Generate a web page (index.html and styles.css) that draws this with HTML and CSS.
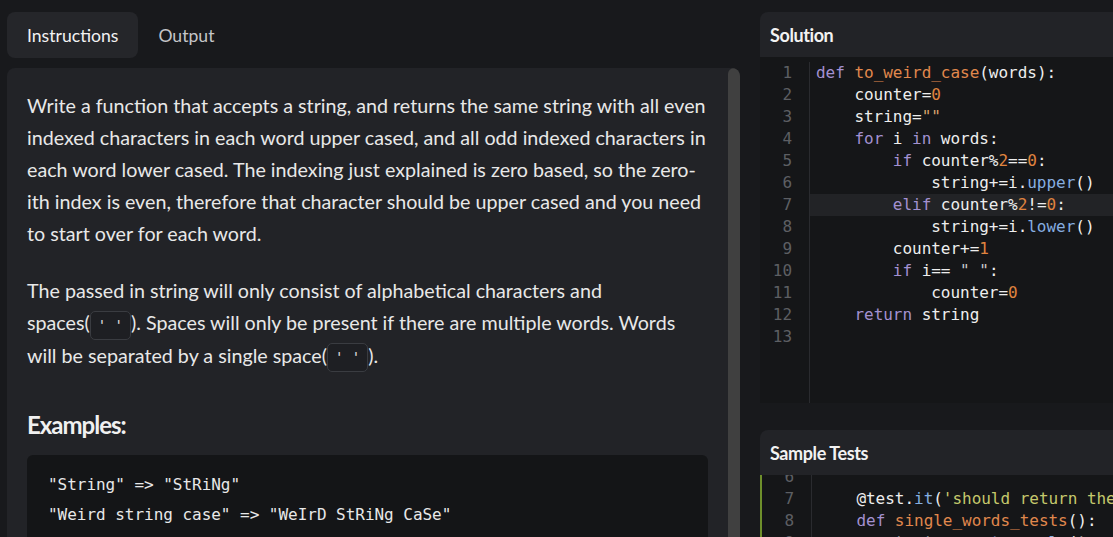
FILE: index.html
```html
<!DOCTYPE html>
<html>
<head>
<meta charset="utf-8">
<link rel="stylesheet" href="styles.css">
</head>
<body>
<div class="app">
  <div class="left">
    <nav class="tabs">
      <div class="tab active">Instructions</div>
      <div class="tab">Output</div>
    </nav>
    <div class="panel">
      <div class="content">
        <p>Write a function that accepts a string, and returns the same string with all even indexed characters in each word upper cased, and all odd indexed characters in each word lower cased. The indexing just explained is zero based, so the zero-ith index is even, therefore that character should be upper cased and you need to start over for each word.</p>
        <p>The passed in string will only consist of alphabetical characters and <span class="nw">spaces(<code class="ic">' '</code>).</span> Spaces will only be present if there are multiple words. Words will be separated by a single <span class="nw">space(<code class="ic">' '</code>).</span></p>
        <h2>Examples:</h2>
        <pre class="example">"String" =&gt; "StRiNg"
"Weird string case" =&gt; "WeIrD StRiNg CaSe"</pre>
      </div>
      <div class="scrollbar"></div>
    </div>
  </div>
  <div class="right">
    <section class="editor solution">
      <header class="ed-head">Solution</header>
      <div class="ed-body">
        <div class="gutter">
          <div>1</div><div>2</div><div>3</div><div>4</div><div>5</div><div>6</div><div>7</div><div>8</div><div>9</div><div>10</div><div>11</div><div>12</div><div>13</div>
        </div>
        <div class="lines">
          <div class="ln"><span class="k">def</span> <span class="f">to_weird_case</span>(words):</div>
          <div class="ln">    counter=<span class="n">0</span></div>
          <div class="ln">    string=<span class="s">""</span></div>
          <div class="ln">    <span class="k">for</span> i <span class="k">in</span> words:</div>
          <div class="ln">        <span class="k">if</span> counter%<span class="n">2</span>==<span class="n">0</span>:</div>
          <div class="ln">            string+=i.<span class="m">upper</span>()</div>
          <div class="ln active">        <span class="k">elif</span> counter%<span class="n">2</span>!=<span class="n">0</span>:</div>
          <div class="ln">            string+=i.<span class="m">lower</span>()</div>
          <div class="ln">        counter+=<span class="n">1</span></div>
          <div class="ln">        <span class="k">if</span> i== <span class="s2">" "</span>:</div>
          <div class="ln">            counter=<span class="n">0</span></div>
          <div class="ln">    <span class="k">return</span> string</div>
          <div class="ln"> </div>
        </div>
      </div>
    </section>
    <section class="editor tests">
      <header class="ed-head">Sample Tests</header>
      <div class="ed-body scrolled">
        <div class="gutter shift">
          <div>6</div><div>7</div><div>8</div><div>9</div>
        </div>
        <div class="lines shift">
          <div class="ln"> </div>
          <div class="ln">    @test.<span class="m">it</span>(<span class="t">'should return the correct value for a single word'</span>)</div>
          <div class="ln">    <span class="k">def</span> <span class="f">single_words_tests</span>():</div>
          <div class="ln">        test.<span class="m">assert_equals</span>(to_weird_case(<span class="t">'This'</span>), <span class="t">'ThIs'</span>)</div>
        </div>
      </div>
    </section>
  </div>
</div>
</body>
</html>
```

FILE: styles.css
```css
* { box-sizing: border-box; }
html, body {
  margin: 0;
  padding: 0;
  height: 100%;
  overflow: hidden;
}
body {
  background: #18191c;
  color: #e6e6e6;
  font-family: Lato, "Noto Sans", sans-serif;
}
.app {
  display: flex;
  gap: 20px;
  padding: 12px 0 0 7px;
  height: 100%;
  width: 1200px;
}
.left {
  width: 733px;
  flex: none;
  display: flex;
  flex-direction: column;
  gap: 10px;
}
.tabs {
  display: flex;
  height: 46px;
}
.tab {
  display: flex;
  align-items: center;
  padding: 0 20px;
  font-size: 17.6px;
  color: #c4c5c8;
  border-radius: 8px;
  height: 46px;
}
.tab.active {
  background: #25262a;
  color: #f2f2f2;
}
.panel {
  flex: 1;
  display: flex;
  background: #222327;
  border-radius: 8px 8px 0 0;
  overflow: hidden;
}
.content {
  flex: 1;
  padding: 22px 20px 0 20px;
}
.content p {
  margin: 0 0 25px 0;
  font-size: 19.7px;
  line-height: 32px;
  color: #e8e8e8;
}
.nw {
  white-space: nowrap;
}
.ic {
  display: inline-block;
  font-family: "DejaVu Sans Mono", monospace;
  font-size: 14px;
  line-height: 17px;
  padding: 5px 7px;
  border: 1px solid #3a3c41;
  border-radius: 5px;
  background: #1e1f23;
  color: #e0e0e0;
  vertical-align: middle;
}
.content h2 {
  margin: 38px 0 15px 0;
  font-size: 24px;
  line-height: 30px;
  font-weight: 700;
  letter-spacing: -1px;
  color: #f0f0f0;
}
.example {
  margin: 0;
  background: #141517;
  border-radius: 6px;
  padding: 15px 21px;
  font-family: "DejaVu Sans Mono", monospace;
  font-size: 16px;
  line-height: 30px;
  letter-spacing: -0.03px;
  color: #e8e8e8;
}
.scrollbar {
  width: 12px;
  flex: none;
  background: #404040;
  border-radius: 6px 6px 0 0;
}
.right {
  width: 420px;
  flex: none;
  display: flex;
  flex-direction: column;
  gap: 27px;
}
.editor {
  border-radius: 8px 8px 0 0;
  overflow: hidden;
  display: flex;
  flex-direction: column;
}
.ed-head {
  height: 45px;
  display: flex;
  align-items: center;
  padding-left: 10px;
  background: #222327;
  font-weight: 700;
  font-size: 18px;
  letter-spacing: -0.4px;
  color: #f2f2f2;
}
.ed-body {
  display: flex;
  background: #151618;
  font-family: "DejaVu Sans Mono", monospace;
  font-size: 16px;
  line-height: 22px;
  letter-spacing: -0.03px;
  color: #eeeeee;
}
.solution .ed-body {
  height: 346px;
  padding-top: 5px;
}
.tests {
  flex: 1;
}
.tests .ed-body {
  flex: 1;
  border-left: 2px solid #6e8f2b;
  overflow: hidden;
}
.gutter {
  width: 50px;
  flex: none;
  border-right: 1px solid #2a2b2f;
  padding-right: 17px;
  text-align: right;
  color: #5d5f63;
}
.lines {
  flex: 1;
}
.ln {
  white-space: pre;
  padding-left: 6px;
  height: 22px;
}
.ln.active {
  background: #222326;
}
.shift > div:first-child {
  margin-top: -9px;
}
.k { color: #a391d1; }
.f { color: #e0884d; }
.n { color: #e0843f; }
.s { color: #dba26e; }
.s2 { color: #c9c9c9; }
.m { color: #86aee0; }
.t { color: #c5c86c; }
```
